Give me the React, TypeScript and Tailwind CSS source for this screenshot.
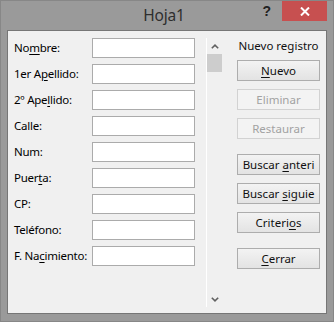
import React from "react";

const U = ({ children }: { children: React.ReactNode }) => (
  <span className="underline decoration-1 underline-offset-[2px]">{children}</span>
);

const fields: React.ReactNode[] = [
  <>No<U>m</U>bre:</>,
  <>1er A<U>p</U>ellido:</>,
  <>2º Ape<U>l</U>lido:</>,
  <>Calle:</>,
  <>Num:</>,
  <>Puer<U>t</U>a:</>,
  <>CP:</>,
  <>Teléfono:</>,
  <>F. Na<U>c</U>imiento:</>,
];

function Btn({ children, disabled, className = "" }: { children: React.ReactNode; disabled?: boolean; className?: string }) {
  return (
    <div
      className={
        "h-[21px] w-[83px] flex items-center justify-center text-[11.5px] leading-none border " +
        (disabled
          ? "border-[#d2d2d2] bg-[#f3f3f3] text-[#a2a2a2] "
          : "border-[#adadad] bg-gradient-to-b from-[#f3f3f3] to-[#e3e3e3] text-[#101010] ") +
        className
      }
    >
      <span className="whitespace-pre">{children}</span>
    </div>
  );
}

export default function App() {
  return (
    <div className="w-[334px] h-[322px] bg-[#9a9a9a] border border-[#878787] flex flex-col font-['Noto_Sans',sans-serif]">
      <div className="h-[29px] flex">
        <div className="flex-1" />
        <div className="text-[15.5px] text-[#2e2e2e] leading-none pt-[7px] tracking-[-0.2px]">Hoja1</div>
        <div className="flex-1 flex justify-end pr-[6px]">
          <div className="text-[14px] font-bold text-[#222] leading-none pt-[3px] mr-[11px] font-['Liberation_Sans',sans-serif]">?</div>
          <div className="w-[45px] h-[20px] bg-[#c75050] flex items-center justify-center">
            <svg width="10" height="9" viewBox="0 0 10 9">
              <path d="M1 0.5 L9 8.5 M9 0.5 L1 8.5" stroke="#fff" strokeWidth="2" fill="none" />
            </svg>
          </div>
        </div>
      </div>
      <div className="ml-[6px] w-[320px] h-[284px] border border-[#767676] bg-[#f0f0f0] flex">
        <div className="pl-[6px] pt-[7px] flex flex-col gap-[6px]">
          {fields.map((f, i) => (
            <div key={i} className="flex items-center h-[20px]">
              <div className="w-[78px] text-[11.5px] text-[#000] leading-none tracking-[-0.25px] whitespace-nowrap">{f}</div>
              <div className="w-[103px] h-[20px] bg-white border border-[#ababab]" />
            </div>
          ))}
        </div>
        <div className="ml-[11px] mt-[7px] w-[17px] h-[269px] border-l border-white flex flex-col">
          <div className="h-[16px] flex items-center justify-center pr-[1px]">
            <svg width="8" height="5" viewBox="0 0 8 5">
              <path d="M0.8 4.3 L4 1.2 L7.2 4.3" stroke="#606060" strokeWidth="1.6" fill="none" />
            </svg>
          </div>
          <div className="w-[15px] h-[18px] bg-[#cdcdcd]" />
          <div className="flex-1" />
          <div className="h-[16px] flex items-center justify-center pr-[1px]">
            <svg width="8" height="5" viewBox="0 0 8 5">
              <path d="M0.8 0.7 L4 3.8 L7.2 0.7" stroke="#606060" strokeWidth="1.6" fill="none" />
            </svg>
          </div>
        </div>
        <div className="pl-[14px] pt-[7px] flex flex-col">
          <div className="h-[16px] w-[83px] text-center text-[11.5px] leading-[16px] text-[#101010]">Nuevo registro</div>
          <Btn className="mt-[6px]"><U>N</U>uevo</Btn>
          <Btn disabled className="mt-[8px]">Eliminar</Btn>
          <Btn disabled className="mt-[8px]">Restaurar</Btn>
          <Btn className="mt-[15px]">Buscar <U>a</U>nteri</Btn>
          <Btn className="mt-[8px]">Buscar <U>s</U>iguie</Btn>
          <Btn className="mt-[8px]">Criteri<U>o</U>s</Btn>
          <Btn className="mt-[15px]"><U>C</U>errar</Btn>
        </div>
      </div>
    </div>
  );
}
